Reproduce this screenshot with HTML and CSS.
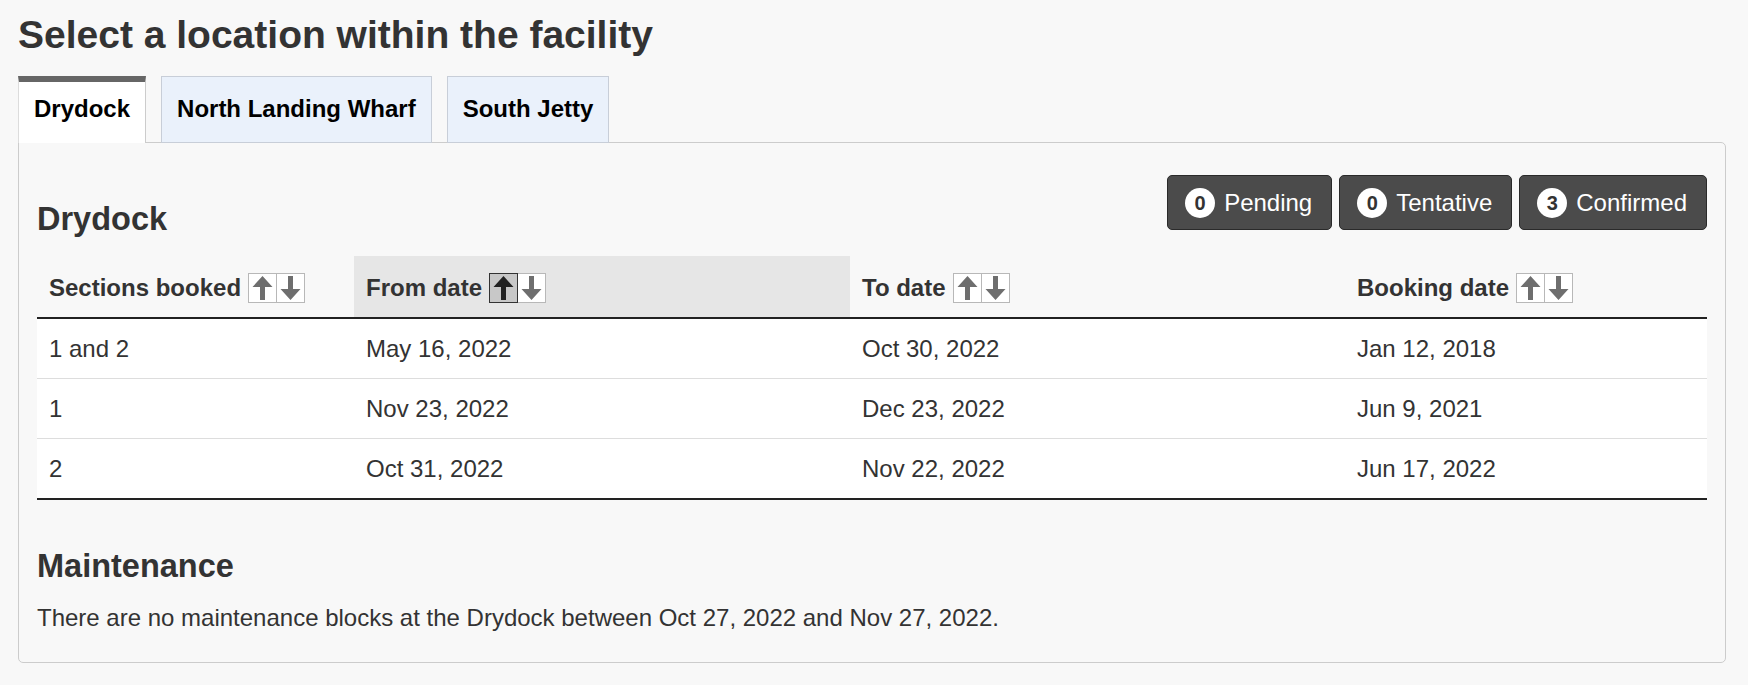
FILE: index.html
```html
<!DOCTYPE html>
<html lang="en">
<head>
<meta charset="utf-8">
<title>Select a location within the facility</title>
<link rel="stylesheet" href="styles.css">
</head>
<body>
<div class="page">
  <h1 class="title">Select a location within the facility</h1>
  <div class="tabs">
    <div class="tab active">Drydock</div>
    <div class="tab">North Landing Wharf</div>
    <div class="tab">South Jetty</div>
  </div>
  <section class="panel">
    <div class="panel-head">
      <h2 class="head-title">Drydock</h2>
      <div class="status">
        <button class="status-btn"><span class="badge">0</span>Pending</button>
        <button class="status-btn"><span class="badge">0</span>Tentative</button>
        <button class="status-btn"><span class="badge">3</span>Confirmed</button>
      </div>
    </div>
    <table class="bookings">
      <colgroup>
        <col class="c1"><col class="c2"><col class="c3"><col class="c4">
      </colgroup>
      <thead>
        <tr>
          <th><div class="th-in">Sections booked <span class="sort"><span class="sort-btn"><svg viewBox="0 0 27 28" width="27" height="28"><path class="arr" d="M13.5 2 L3.5 13 L11 13 L11 26 L16 26 L16 13 L23.5 13 Z"/></svg></span><span class="sort-btn"><svg viewBox="0 0 27 28" width="27" height="28"><path class="arr" d="M13.5 26 L3.5 15 L11 15 L11 2 L16 2 L16 15 L23.5 15 Z"/></svg></span></span></div></th>
          <th class="sorted"><div class="th-in">From date <span class="sort"><span class="sort-btn on"><svg viewBox="0 0 27 28" width="27" height="28"><path class="arr" d="M13.5 2 L3.5 13 L11 13 L11 26 L16 26 L16 13 L23.5 13 Z"/></svg></span><span class="sort-btn"><svg viewBox="0 0 27 28" width="27" height="28"><path class="arr" d="M13.5 26 L3.5 15 L11 15 L11 2 L16 2 L16 15 L23.5 15 Z"/></svg></span></span></div></th>
          <th><div class="th-in">To date <span class="sort"><span class="sort-btn"><svg viewBox="0 0 27 28" width="27" height="28"><path class="arr" d="M13.5 2 L3.5 13 L11 13 L11 26 L16 26 L16 13 L23.5 13 Z"/></svg></span><span class="sort-btn"><svg viewBox="0 0 27 28" width="27" height="28"><path class="arr" d="M13.5 26 L3.5 15 L11 15 L11 2 L16 2 L16 15 L23.5 15 Z"/></svg></span></span></div></th>
          <th><div class="th-in">Booking date <span class="sort"><span class="sort-btn"><svg viewBox="0 0 27 28" width="27" height="28"><path class="arr" d="M13.5 2 L3.5 13 L11 13 L11 26 L16 26 L16 13 L23.5 13 Z"/></svg></span><span class="sort-btn"><svg viewBox="0 0 27 28" width="27" height="28"><path class="arr" d="M13.5 26 L3.5 15 L11 15 L11 2 L16 2 L16 15 L23.5 15 Z"/></svg></span></span></div></th>
        </tr>
      </thead>
      <tbody>
        <tr><td>1 and 2</td><td>May 16, 2022</td><td>Oct 30, 2022</td><td>Jan 12, 2018</td></tr>
        <tr><td>1</td><td>Nov 23, 2022</td><td>Dec 23, 2022</td><td>Jun 9, 2021</td></tr>
        <tr><td>2</td><td>Oct 31, 2022</td><td>Nov 22, 2022</td><td>Jun 17, 2022</td></tr>
      </tbody>
    </table>
    <h2 class="maint">Maintenance</h2>
    <p class="note">There are no maintenance blocks at the Drydock between Oct 27, 2022 and Nov 27, 2022.</p>
  </section>
</div>
</body>
</html>
```

FILE: styles.css
```css
html, body {
  margin: 0;
  background: #f8f8f8;
}
body {
  font-family: "Liberation Sans", Arial, sans-serif;
  color: #333;
}
.page {
  padding: 11px 22px 0 18px;
}
.title {
  margin: 0 0 18px;
  font-size: 39px;
  line-height: 47px;
  font-weight: bold;
  color: #333;
}
.tabs {
  display: flex;
  gap: 15px;
  margin-bottom: -1px;
  position: relative;
  z-index: 1;
}
.tab {
  box-sizing: border-box;
  height: 67px;
  padding: 18px 15px 19px;
  border: 1px solid #c8ced8;
  background: #eaf1fb;
  color: #000;
  font-size: 24px;
  line-height: 28px;
  font-weight: bold;
}
.tab.active {
  background: #fff;
  border-top: 6px solid #666;
  border-left-color: #dcdcdc;
  border-right-color: #cccccc;
  border-bottom: 0;
  padding-top: 13px;
  padding-bottom: 20px;
}
.tab.last {
  padding-right: 17px;
}
.panel {
  border: 1px solid #cccccc;
  border-radius: 0 5px 5px 5px;
  background: #f8f8f8;
  padding: 32px 18px 30px;
}
.panel-head {
  display: flex;
  justify-content: space-between;
  align-items: flex-start;
}
.head-title,
.maint {
  font-size: 32.5px;
  line-height: 39px;
  font-weight: bold;
  color: #333;
}
.head-title {
  margin: 25px 0 0;
}
.status {
  display: flex;
  gap: 7px;
}
.status-btn {
  box-sizing: border-box;
  height: 55px;
  display: flex;
  align-items: center;
  gap: 9px;
  padding: 0 19px 0 17px;
  background: #4b4b4b;
  border: 1px solid #2a2a2a;
  border-radius: 5px;
  color: #fff;
  font-family: "Liberation Sans", Arial, sans-serif;
  font-size: 24px;
  line-height: 28px;
}
.badge {
  width: 30px;
  height: 30px;
  border-radius: 50%;
  background: #fff;
  color: #333;
  font-size: 20px;
  font-weight: bold;
  display: flex;
  align-items: center;
  justify-content: center;
}
.bookings {
  margin-top: 17px;
  width: 100%;
  border-collapse: collapse;
  table-layout: fixed;
  font-size: 24px;
}
.c1 { width: 317px; }
.c2 { width: 496px; }
.c3 { width: 495px; }
.c4 { width: auto; }
.bookings th {
  padding: 17px 12px 14px;
  text-align: left;
  font-weight: bold;
  color: #333;
  border-bottom: 2px solid #222;
  vertical-align: middle;
}
.bookings th.sorted {
  background: #e6e6e6;
}
.th-in {
  display: flex;
  align-items: center;
  gap: 7px;
  line-height: 28px;
}
.sort {
  display: flex;
}
.sort-btn {
  box-sizing: border-box;
  width: 29px;
  height: 30px;
  border: 1px solid #b8b8b8;
  background: #fff;
  display: flex;
  align-items: center;
  justify-content: center;
}
.sort-btn + .sort-btn {
  margin-left: -1px;
}
.arr {
  fill: #6e6e6e;
}
.sort-btn.on {
  background: #c8c8c8;
  border-color: #333;
  position: relative;
  z-index: 1;
}
.sort-btn.on .arr {
  fill: #222;
}
.bookings td {
  padding: 16px 12px 15px;
  line-height: 28px;
  background: #fff;
  color: #333;
  border-bottom: 1px solid #dddddd;
}
.bookings tbody tr:last-child td {
  border-bottom: 2px solid #222;
}
.maint {
  margin: 47px 0 0;
}
.note {
  margin: 18px 0 0;
  font-size: 24px;
  line-height: 28px;
  color: #333;
}
```
